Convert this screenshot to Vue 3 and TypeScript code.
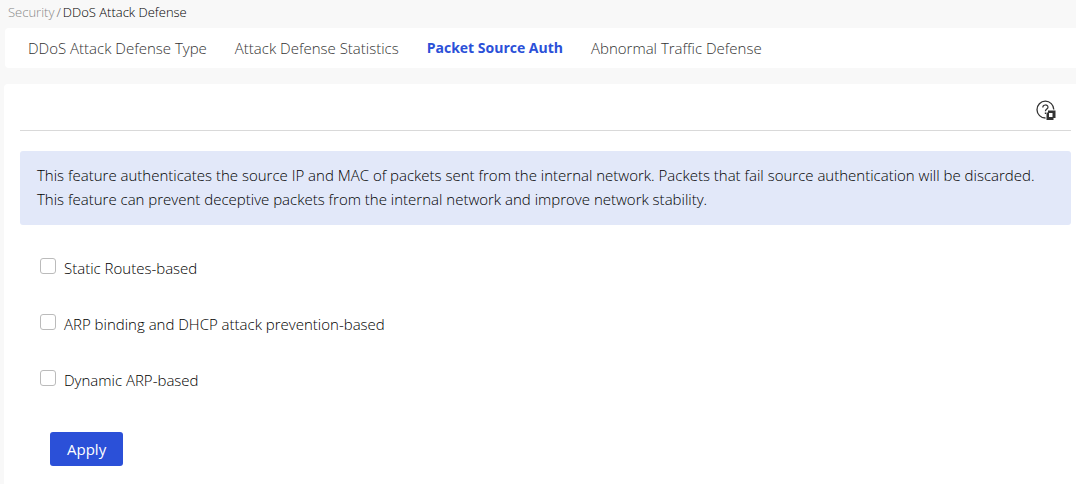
<script setup lang="ts">
import { ref } from 'vue'

interface Tab { label: string; active?: boolean }
interface Option { id: string; label: string }

const tabs: Tab[] = [
  { label: 'DDoS Attack Defense Type' },
  { label: 'Attack Defense Statistics' },
  { label: 'Packet Source Auth', active: true },
  { label: 'Abnormal Traffic Defense' },
]
const options: Option[] = [
  { id: 'static', label: 'Static Routes-based' },
  { id: 'arp', label: 'ARP binding and DHCP attack prevention-based' },
  { id: 'dynamic', label: 'Dynamic ARP-based' },
]
const selected = ref<string[]>([])
</script>

<template>
  <div class="page">
    <nav class="crumbs" aria-label="Breadcrumb">
      <a href="#">Security</a><span class="sep">/</span><span class="current">DDoS Attack Defense</span>
    </nav>
    <nav class="tabs" aria-label="Sections">
      <a v-for="tab in tabs" :key="tab.label" href="#" :class="{ active: tab.active }">{{ tab.label }}</a>
    </nav>
    <main class="panel">
      <header class="toolbar">
        <button class="help" type="button" aria-label="Help">
          <svg width="20" height="20" viewBox="0 0 20 20" fill="none" stroke="#333" stroke-width="1.3">
            <path d="M9.5 18A8.4 8.4 0 1 1 17.8 9.5" />
            <path d="M6.8 7.4C6.8 4.2 12 4.2 12 7.2C12 9 9.4 9 9.4 11.2M9.4 12.6V14" stroke-width="1.2" />
            <path d="M12 10.5H19.5V18H17.5V20H10.5V12.5H12Z" fill="#333" stroke="none" />
            <path d="M13 13H16.5V17H13Z" fill="#fff" stroke="none" />
          </svg>
        </button>
      </header>
      <p class="notice">
        This feature authenticates the source IP and MAC of packets sent from the internal network. Packets that fail source authentication will be discarded.<br>
        This feature can prevent deceptive packets from the internal network and improve network stability.
      </p>
      <form class="form" @submit.prevent>
        <label v-for="option in options" :key="option.id" class="option">
          <input v-model="selected" type="checkbox" :value="option.id">
          <span>{{ option.label }}</span>
        </label>
        <button class="apply" type="submit">Apply</button>
      </form>
    </main>
  </div>
</template>

<style>
body { background: #f8f8f8; }
</style>

<style scoped>
.page {
  display: flex;
  flex-direction: column;
  min-height: 100vh;
  padding-left: 4px;
  box-sizing: border-box;
  font-family: "Open Sans", "Noto Sans", sans-serif;
  font-size: 15px;
  font-weight: 300;
  line-height: 24px;
  color: #000;
}
a { color: inherit; text-decoration: none; }
.crumbs { display: flex; height: 28px; padding-left: 4px; box-sizing: border-box; font-size: 13px; }
.crumbs a { color: #888; }
.sep { padding: 0 2px; color: #666; }
.tabs {
  display: flex;
  align-items: center;
  gap: 28px;
  height: 40px;
  margin-left: 1px;
  padding-left: 23px;
  border-radius: 4px 0 0 4px;
  background: #fff;
  color: #333;
  white-space: nowrap;
}
.tabs .active { color: #2b50d8; font-size: 14px; font-weight: 700; }
.panel { flex: 1; margin-top: 16px; padding: 0 5px 18px 16px; border-radius: 4px 0 0 0; background: #fff; }
.toolbar {
  display: flex;
  justify-content: flex-end;
  align-items: center;
  height: 47px;
  padding: 5px 15px 0 0;
  box-sizing: border-box;
  border-bottom: 1px solid #d9d9d9;
}
.help { display: flex; padding: 0; border: 0; background: none; }
.notice { margin: 20px 0 0; padding: 12px 16px 14px 17px; border-radius: 3px; background: #e2e8f9; }
.form { display: flex; flex-direction: column; align-items: flex-start; gap: 32px; padding: 31px 20px 0; }
.option { display: flex; gap: 8px; }
input { appearance: none; width: 16px; height: 16px; margin: 2px 0 0; border: 1px solid #bbb; border-radius: 3px; background: #fff; }
.apply { height: 34px; margin: 8px 0 0 10px; padding: 0 17px; border: 0; border-radius: 3px; background: #2b50d8; color: #fff; font: inherit; font-weight: 400; }
</style>
